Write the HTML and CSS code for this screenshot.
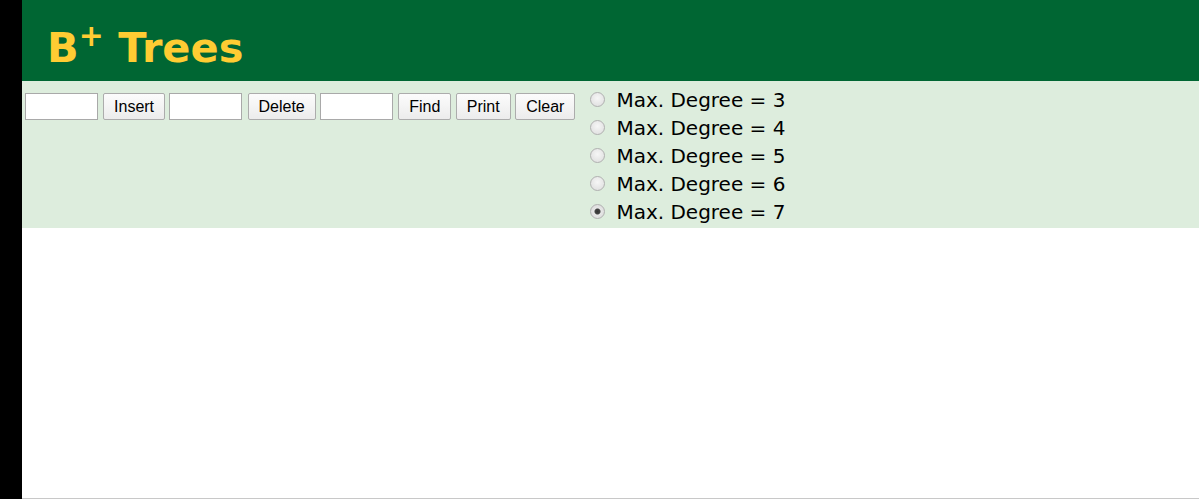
FILE: index.html
```html
<!DOCTYPE html>
<html>
<head>
<meta charset="utf-8">
<title>B+ Trees</title>
<link rel="stylesheet" href="styles.css">
</head>
<body>
<div class="page">
  <div class="side"></div>
  <div class="main">
    <header class="header">
      <h1 class="title">B<sup class="plus">+</sup> Trees</h1>
    </header>
    <div class="controls">
      <div class="actions">
        <input class="field" type="text">
        <button class="btn">Insert</button>
        <input class="field" type="text">
        <button class="btn">Delete</button>
        <input class="field" type="text">
        <button class="btn">Find</button>
        <button class="btn">Print</button>
        <button class="btn">Clear</button>
      </div>
      <div class="degrees">
        <label class="degree"><input class="radio" type="radio" name="deg">Max. Degree = 3</label>
        <label class="degree"><input class="radio" type="radio" name="deg">Max. Degree = 4</label>
        <label class="degree"><input class="radio" type="radio" name="deg">Max. Degree = 5</label>
        <label class="degree"><input class="radio" type="radio" name="deg">Max. Degree = 6</label>
        <label class="degree"><input class="radio" type="radio" name="deg" checked>Max. Degree = 7</label>
      </div>
    </div>
    <div class="canvas"></div>
  </div>
</div>
</body>
</html>
```
FILE: styles.css
```css
html, body {
  margin: 0;
  padding: 0;
  background: #ffffff;
}

.page {
  display: flex;
  height: 499px;
  overflow: hidden;
}

.side {
  width: 22px;
  flex: none;
  background: #000000;
}

.main {
  flex: 1;
  display: flex;
  flex-direction: column;
}

.header {
  height: 81px;
  background: #006633;
  box-sizing: border-box;
  padding: 25px 0 0 25px;
}

.title {
  margin: 0;
  font-family: "DejaVu Sans", Verdana, sans-serif;
  font-weight: bold;
  font-size: 41.5px;
  line-height: 46px;
  color: #ffcc33;
}

.plus {
  font-size: 0.72em;
  line-height: 0;
  vertical-align: 0.55em;
}

.controls {
  height: 147px;
  box-sizing: border-box;
  background: #ddeddd;
  display: flex;
  align-items: flex-start;
}

.actions {
  display: flex;
  align-items: center;
  gap: 4.45px;
  padding: 12px 0 0 3px;
}

.field {
  width: 73px;
  height: 27px;
  box-sizing: border-box;
  margin: 0 0.6px 0 0;
  border: 1px solid #a9a9a9;
  background: #ffffff;
  padding: 1px 2px;
  font-family: "Liberation Sans", Arial, sans-serif;
  font-size: 13px;
}

.btn {
  height: 27px;
  box-sizing: border-box;
  margin: 0;
  padding: 0 10px;
  border: 1px solid #acacac;
  border-radius: 2px;
  background: linear-gradient(#fcfcfc, #ececec);
  color: #000000;
  font-family: "Liberation Sans", Arial, sans-serif;
  font-size: 16px;
}

.degrees {
  display: flex;
  flex-direction: column;
  padding: 5px 0 0 15px;
}

.degree {
  display: flex;
  align-items: center;
  gap: 11px;
  height: 28px;
  font-family: "DejaVu Sans", Verdana, sans-serif;
  font-size: 20px;
  color: #000000;
}

.radio {
  appearance: none;
  -webkit-appearance: none;
  width: 15px;
  height: 15px;
  margin: 0 0 2px 0;
  border: 1px solid #b0b0b0;
  border-radius: 50%;
  box-sizing: border-box;
  background: radial-gradient(circle at 50% 40%, #f6f6f6 0%, #dcdcdc 100%);
}

.radio:checked {
  background: radial-gradient(circle, #333333 0, #444444 2.5px, #e6e6e6 3.5px, #d8d8d8 100%);
}

.canvas {
  height: 270px;
  border-bottom: 1px solid #c8c8c8;
  background: #ffffff;
}
```
